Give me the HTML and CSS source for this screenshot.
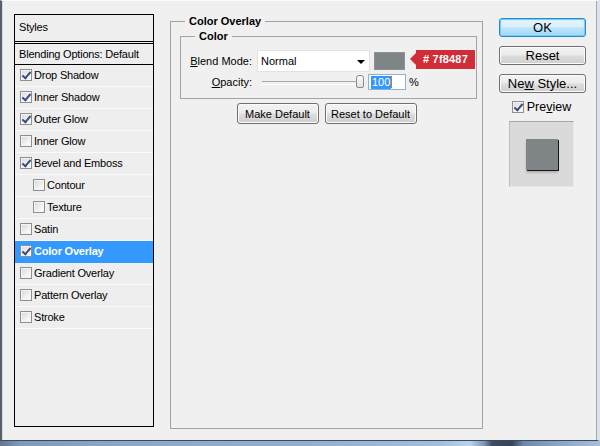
FILE: index.html
```html
<!DOCTYPE html>
<html>
<head>
<meta charset="utf-8">
<link rel="stylesheet" href="styles.css">
</head>
<body>
<div class="window">
  <div class="dialog">
    <div class="styles-panel">
      <div class="panel-head">Styles</div>
      <div class="panel-blend">Blending Options: Default</div>
      <div class="row"><span class="check on"></span>Drop Shadow</div>
      <div class="row"><span class="check on"></span>Inner Shadow</div>
      <div class="row"><span class="check on"></span>Outer Glow</div>
      <div class="row"><span class="check"></span>Inner Glow</div>
      <div class="row"><span class="check on"></span>Bevel and Emboss</div>
      <div class="row sub"><span class="check"></span>Contour</div>
      <div class="row sub"><span class="check"></span>Texture</div>
      <div class="row"><span class="check"></span>Satin</div>
      <div class="row selected"><span class="check on"></span>Color Overlay</div>
      <div class="row"><span class="check"></span>Gradient Overlay</div>
      <div class="row"><span class="check"></span>Pattern Overlay</div>
      <div class="row"><span class="check"></span>Stroke</div>
    </div>

    <fieldset class="group outer">
      <legend>Color Overlay</legend>
      <fieldset class="group inner">
        <legend>Color</legend>
        <div class="form-row blend-row">
          <span class="label"><u>B</u>lend Mode:</span>
          <div class="select"><span>Normal</span><span class="arrow"></span></div>
          <span class="swatch"></span>
          <span class="badge"># 7f8487</span>
        </div>
        <div class="form-row opacity-row">
          <span class="label"><u>O</u>pacity:</span>
          <div class="slider"><span class="thumb"></span></div>
          <div class="num"><span class="sel">100</span><span class="caret"></span></div>
          <span class="pct">%</span>
        </div>
      </fieldset>
      <div class="defaults">
        <button class="btn make">Make Default</button>
        <button class="btn reset-def">Reset to Default</button>
      </div>
    </fieldset>

    <div class="actions">
      <button class="btn big ok">OK</button>
      <button class="btn big">Reset</button>
      <button class="btn big">Ne<u>w</u> Style...</button>
      <div class="preview-check"><span class="check on"></span>Pre<u>v</u>iew</div>
      <div class="preview-box"><span class="preview-square"></span></div>
    </div>
  </div>
  <div class="frame-bottom"></div>
</div>
</body>
</html>
```

FILE: styles.css
```css
* { box-sizing: border-box; }
html, body { margin: 0; padding: 0; background: #f0f0f0; }
body {
  font-family: "Liberation Sans", Arial, sans-serif;
  font-size: 11px;
  color: #000;
}
u { text-decoration: underline; text-underline-offset: 1px; }

.window {
  width: 600px;
  height: 446px;
  overflow: hidden;
  display: flex;
  flex-direction: column;
}
.dialog {
  height: 441px;
  flex: none;
  display: flex;
  align-items: flex-start;
  background: #f0f0f0;
  border-top: 1px solid #fbfbfb;
  border-left: 2px solid #56606d;
  border-right: 3px solid #dde3ea;
  border-bottom: 1px solid #3e4856;
  box-shadow: inset -1px 0 0 #9fa6ae, inset 1px 0 0 #d9d9d9;
  padding-left: 12px;
}
.frame-bottom {
  height: 5px;
  flex: none;
  background: linear-gradient(90deg, #64768e 0px, #7f99ba 20px, #8ba6c7 120px, #93aecd 300px, #a3bedb 440px, #b9d3ea 470px, #7f98b4 484px, #3c4d61 492px, #34455a 512px, #6f89a9 524px, #8aa5c6 560px, #a9bfd8 600px);
}

/* Styles list */
.styles-panel {
  width: 140px;
  height: 413px;
  margin-top: 13px;
  border: 1px solid #000;
  background: #eeeeee;
  display: flex;
  flex-direction: column;
  letter-spacing: -0.2px;
}
.panel-head {
  height: 29px;
  padding-left: 4px;
  line-height: 25px;
  border-bottom: 3px double #000;
  flex: none;
}
.panel-blend {
  height: 21px;
  padding-left: 4px;
  line-height: 20px;
  border-bottom: 1px solid #000;
  flex: none;
}
.row {
  height: 22px;
  flex: none;
  display: flex;
  align-items: center;
  padding-left: 5px;
  padding-bottom: 1px;
  border-bottom: 1px solid #fafafa;
}
.row.sub { padding-left: 18px; }
.row.selected {
  background: #3399ff;
  color: #fff;
  font-weight: bold;
  border-bottom-color: #3399ff;
}

.check {
  width: 12px;
  height: 12px;
  flex: none;
  margin-right: 2px;
  border: 1px solid #8e8f8f;
  background: linear-gradient(135deg, #d6d6d6 0%, #f2f2f2 60%, #ffffff 100%);
  box-shadow: inset 0 0 0 1px #f4f4f4;
  position: relative;
}
.check.on::after {
  content: "";
  position: absolute;
  left: 3px;
  top: 0px;
  width: 3px;
  height: 7px;
  border-right: 2px solid #3b4d86;
  border-bottom: 2px solid #3b4d86;
  transform: rotate(40deg);
}

/* Group boxes */
.group {
  margin: 0;
  padding: 0;
  border: 1px solid #a3a3a3;
  min-inline-size: 0;
}
.group > legend {
  font-weight: bold;
  line-height: 13px;
  padding: 0 4px;
  margin-left: 14px;
}
.outer {
  width: 313px;
  height: 414px;
  margin: 14px 0 0 16px;
}
.inner {
  width: 297px;
  height: 69px;
  margin: 2px 0 0 9px;
}
.form-row {
  display: flex;
  align-items: center;
}
.blend-row { margin-top: 7px; height: 22px; }
.opacity-row { margin-top: 2px; height: 16px; }
.label {
  width: 71px;
  margin-right: 5px;
  text-align: right;
  flex: none;
}
.select {
  width: 113px;
  height: 22px;
  background: #fff;
  border: 1px solid #e2e2e2;
  display: flex;
  align-items: center;
  justify-content: space-between;
  padding: 0 4px 0 3px;
  flex: none;
}
.arrow {
  width: 0; height: 0;
  border-left: 4px solid transparent;
  border-right: 4px solid transparent;
  border-top: 4px solid #000;
  margin-top: 1px;
}
.swatch {
  width: 31px;
  height: 18px;
  margin-left: 4px;
  background: #7f8487;
  border: 1px solid #8c9193;
  flex: none;
}
.badge {
  position: relative;
  margin-left: 11px;
  width: 59px;
  height: 19px;
  background: #d02d38;
  color: #fff;
  font-weight: bold;
  font-size: 11px;
  line-height: 19px;
  text-align: center;
  flex: none;
  margin-top: -3px;
  letter-spacing: 0.2px;
}
.badge::before {
  content: "";
  position: absolute;
  left: -6px;
  top: 3px;
  border-top: 6.5px solid transparent;
  border-bottom: 6.5px solid transparent;
  border-right: 6px solid #d02d38;
}

.slider {
  position: relative;
  width: 103px;
  height: 16px;
  margin-left: 4px;
  flex: none;
}
.slider::before {
  content: "";
  position: absolute;
  left: 1px;
  right: 4px;
  top: 7px;
  height: 2px;
  border-top: 1px solid #a9a9a9;
  border-bottom: 1px solid #ffffff;
}
.thumb {
  position: absolute;
  right: 0;
  top: 1px;
  width: 8px;
  height: 13px;
  border: 1px solid #8a8a8a;
  border-radius: 3px 3px 2px 2px;
  background: linear-gradient(#fbfbfb, #e2e2e2);
}
.num {
  width: 38px;
  height: 16px;
  margin-left: 4px;
  border: 1px solid #8fb1d8;
  background: #fff;
  display: flex;
  align-items: center;
  padding-left: 2px;
  flex: none;
}
.sel {
  background: #3399ff;
  color: #fff;
  line-height: 13px;
  padding: 0 1px;
}
.caret {
  width: 1px;
  height: 12px;
  background: #e07020;
}
.pct { margin-left: 3px; }

.defaults {
  display: flex;
  justify-content: center;
  gap: 6px;
  margin-top: 4px;
}
.btn {
  font-family: "Liberation Sans", Arial, sans-serif;
  font-size: 11px;
  color: #000;
  height: 21px;
  padding: 0;
  border: 1px solid #707070;
  border-radius: 3px;
  background: linear-gradient(#f3f3f3 0%, #ebebeb 48%, #dddddd 52%, #cfcfcf 100%);
  box-shadow: inset 0 0 0 1px #fcfcfc;
}
.make { width: 82px; }
.reset-def { width: 92px; }

.actions {
  width: 87px;
  margin: 17px 0 0 16px;
  display: flex;
  flex-direction: column;
  gap: 9px;
}
.btn.big {
  width: 87px;
  height: 19px;
  font-size: 13px;
  line-height: 17px;
}
.btn.ok {
  border-color: #2d86c5;
  background: linear-gradient(#e9f6fd 0%, #d7effc 48%, #bce4fa 52%, #a6d8f4 100%);
  box-shadow: inset 0 0 0 1px #6fd0f7, inset 0 0 3px #9be3fb;
}
.preview-check {
  display: flex;
  align-items: center;
  justify-content: center;
  height: 13px;
  margin-top: -2px;
  font-size: 12.5px;
  padding-right: 2px;
}
.preview-check .check { margin-right: 3px; }
.preview-box {
  width: 65px;
  height: 66px;
  margin: -1px 0 0 10px;
  background: #dadada;
  border-top: 1px solid #a6a6a6;
  border-left: 1px solid #bdbdbd;
  border-right: 1px solid #e8e8e8;
  border-bottom: 1px solid #e6e6e6;
  padding: 17px 0 0 16px;
}
.preview-square {
  display: block;
  width: 32px;
  height: 31px;
  background: #7f8487;
  box-shadow: 1px 1px 0 #151515, 0 3px 2px rgba(0,0,0,0.18);
}
```
